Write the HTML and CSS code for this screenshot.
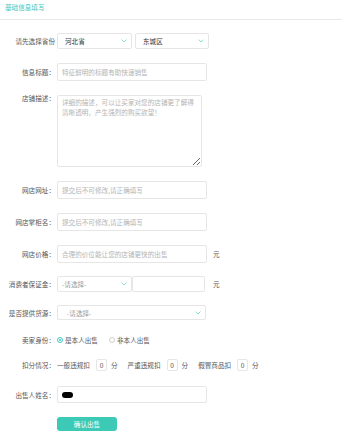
FILE: index.html
```html
<!DOCTYPE html>
<html lang="zh-CN">
<head>
<meta charset="utf-8">
<title>基础信息填写</title>
<link rel="stylesheet" href="styles.css">
</head>
<body>
<div class="head">基础信息填写</div>
<div class="form">
  <div class="row">
    <span class="lbl">请先选择省份</span>
    <div class="sel w75"><span class="val">河北省</span><svg class="chev" width="6" height="4" viewBox="0 0 6 4"><polyline points="0.5,0.5 3,3 5.5,0.5" fill="none" stroke="#8fdfd8" stroke-width="1"/></svg></div>
    <div class="sel w74 ml3"><span class="val">东城区</span><svg class="chev" width="6" height="4" viewBox="0 0 6 4"><polyline points="0.5,0.5 3,3 5.5,0.5" fill="none" stroke="#8fdfd8" stroke-width="1"/></svg></div>
  </div>
  <div class="row">
    <span class="lbl">信息标题：</span>
    <input class="inp" type="text" placeholder="特征鲜明的标题有助快速销售">
  </div>
  <div class="row row-top">
    <span class="lbl lbl-top">店铺描述：</span>
    <textarea class="txa" placeholder="详细的描述，可以让买家对您的店铺更了解得清晰透明，产生强烈的购买欲望！"></textarea>
  </div>
  <div class="row">
    <span class="lbl">网店网址：</span>
    <input class="inp" type="text" placeholder="提交后不可修改,请正确填写">
  </div>
  <div class="row">
    <span class="lbl">网店掌柜名：</span>
    <input class="inp" type="text" placeholder="提交后不可修改,请正确填写">
  </div>
  <div class="row">
    <span class="lbl">网店价格：</span>
    <input class="inp" type="text" placeholder="合理的价位能让您的店铺更快的出售">
    <span class="yuan y6">元</span>
  </div>
  <div class="row r13">
    <span class="lbl">消费者保证金：</span>
    <div class="sel w75 pl4"><span class="ph">-请选择-</span><svg class="chev" width="6" height="4" viewBox="0 0 6 4"><polyline points="0.5,0.5 3,3 5.5,0.5" fill="none" stroke="#8fdfd8" stroke-width="1"/></svg></div>
    <input class="inp small ml3" type="text">
    <span class="yuan">元</span>
  </div>
  <div class="row r13">
    <span class="lbl">是否提供货源：</span>
    <div class="sel w149 h15 pl9"><span class="ph">-请选择-</span><svg class="chev" width="6" height="4" viewBox="0 0 6 4"><polyline points="0.5,0.5 3,3 5.5,0.5" fill="none" stroke="#8fdfd8" stroke-width="1"/></svg></div>
  </div>
  <div class="row line">
    <span class="lbl">卖家身份：</span>
    <div class="radios">
      <span class="radio"><span class="dot on"></span>是本人出售</span>
      <span class="radio"><span class="dot"></span>非本人出售</span>
    </div>
  </div>
  <div class="row line r13">
    <span class="lbl">扣分情况：</span>
    <span class="score">一般违规扣</span><span class="box">0</span><span class="unit">分</span>
    <span class="score">严重违规扣</span><span class="box">0</span><span class="unit">分</span>
    <span class="score">假冒商品扣</span><span class="box">0</span><span class="unit">分</span>
  </div>
  <div class="row r15">
    <span class="lbl">出售人姓名：</span>
    <div class="inp name"><span class="blob"></span></div>
  </div>
  <div class="row">
    <button class="btn" type="button">确认出售</button>
  </div>
</div>
</body>
</html>
```

FILE: styles.css
```css
* { box-sizing: border-box; }
body {
  margin: 0;
  background: #fff;
  font-family: "Noto Sans CJK SC", "Noto Sans", sans-serif;
  font-size: 6.6px;
  color: #555;
}
.head {
  width: 342px;
  height: 20px;
  padding-left: 5px;
  line-height: 14px;
  color: #3fc6c0;
  border-bottom: 1px solid #e8e8e8;
}
.form {
  display: flex;
  flex-direction: column;
  gap: 14px;
  padding-top: 13px;
}
.row {
  display: flex;
  align-items: center;
}
.row-top { align-items: flex-start; }
.r13 { margin-top: -1px; }
.r15 { margin-top: 1px; }
.line { height: 12px; }
.lbl {
  flex: none;
  width: 55px;
  margin-right: 2px;
  text-align: right;
  white-space: nowrap;
  color: #555;
}
.lbl-top { line-height: 7px; margin-top: 0; }
.sel {
  flex: none;
  height: 16px;
  border: 1px solid #e6e6e6;
  border-radius: 2px;
  display: flex;
  align-items: center;
  justify-content: space-between;
  padding: 0 4px 0 7px;
  background: #fff;
}
.w75 { width: 75px; }
.w74 { width: 74px; }
.w149 { width: 149px; }
.h15 { height: 15px; }
.pl4 { padding-left: 4px; }
.pl9 { padding-left: 9px; }
.ml3 { margin-left: 3px; }
.val { color: #333; }
.ph { color: #9a9a9a; }
.chev { display: block; }
.inp {
  flex: none;
  width: 150px;
  height: 18px;
  border: 1px solid #e6e6e6;
  border-radius: 2px;
  padding: 0 4px;
  font: inherit;
  color: #333;
  background: #fff;
  outline: none;
  margin: 0;
}
.inp::placeholder { color: #b4b4b4; }
.inp.small { width: 73px; height: 16px; }
.txa {
  flex: none;
  width: 145px;
  height: 72px;
  margin: 0;
  border: 1px solid #e6e6e6;
  border-radius: 2px;
  padding: 1px 5px 0 4px;
  font-family: inherit;
  font-size: 6.6px;
  line-height: 10px;
  color: #333;
  outline: none;
  resize: vertical;
}
.txa::placeholder { color: #b4b4b4; }
.yuan { margin-left: 8px; color: #555; }
.y6 { margin-left: 6px; }
.radios { display: flex; align-items: center; gap: 11px; }
.radio { display: flex; align-items: center; gap: 2px; }
.dot {
  width: 6px;
  height: 6px;
  border: 1px solid #cfcfcf;
  border-radius: 50%;
  display: flex;
  align-items: center;
  justify-content: center;
}
.dot.on { border-color: #3fc6c0; }
.dot.on::after {
  content: "";
  width: 2px;
  height: 2px;
  border-radius: 50%;
  background: #3fc6c0;
}
.score { white-space: nowrap; }
.box {
  flex: none;
  width: 11px;
  height: 12px;
  margin: 0 4px 0 6px;
  border: 1px solid #e6e6e6;
  border-radius: 2px;
  display: flex;
  align-items: center;
  justify-content: center;
  color: #555;
}
.unit { margin-right: 10px; }
.name { height: 17px; display: flex; align-items: center; padding-left: 4px; }
.blob {
  display: block;
  width: 11px;
  height: 6px;
  border-radius: 3px;
  background: #000;
}
.btn {
  margin: 0 0 0 57px;
  width: 60px;
  height: 14px;
  border: none;
  border-radius: 3px;
  background: #3ccab6;
  color: #fff;
  font-family: inherit;
  font-size: 6.6px;
  padding: 0;
}
```
